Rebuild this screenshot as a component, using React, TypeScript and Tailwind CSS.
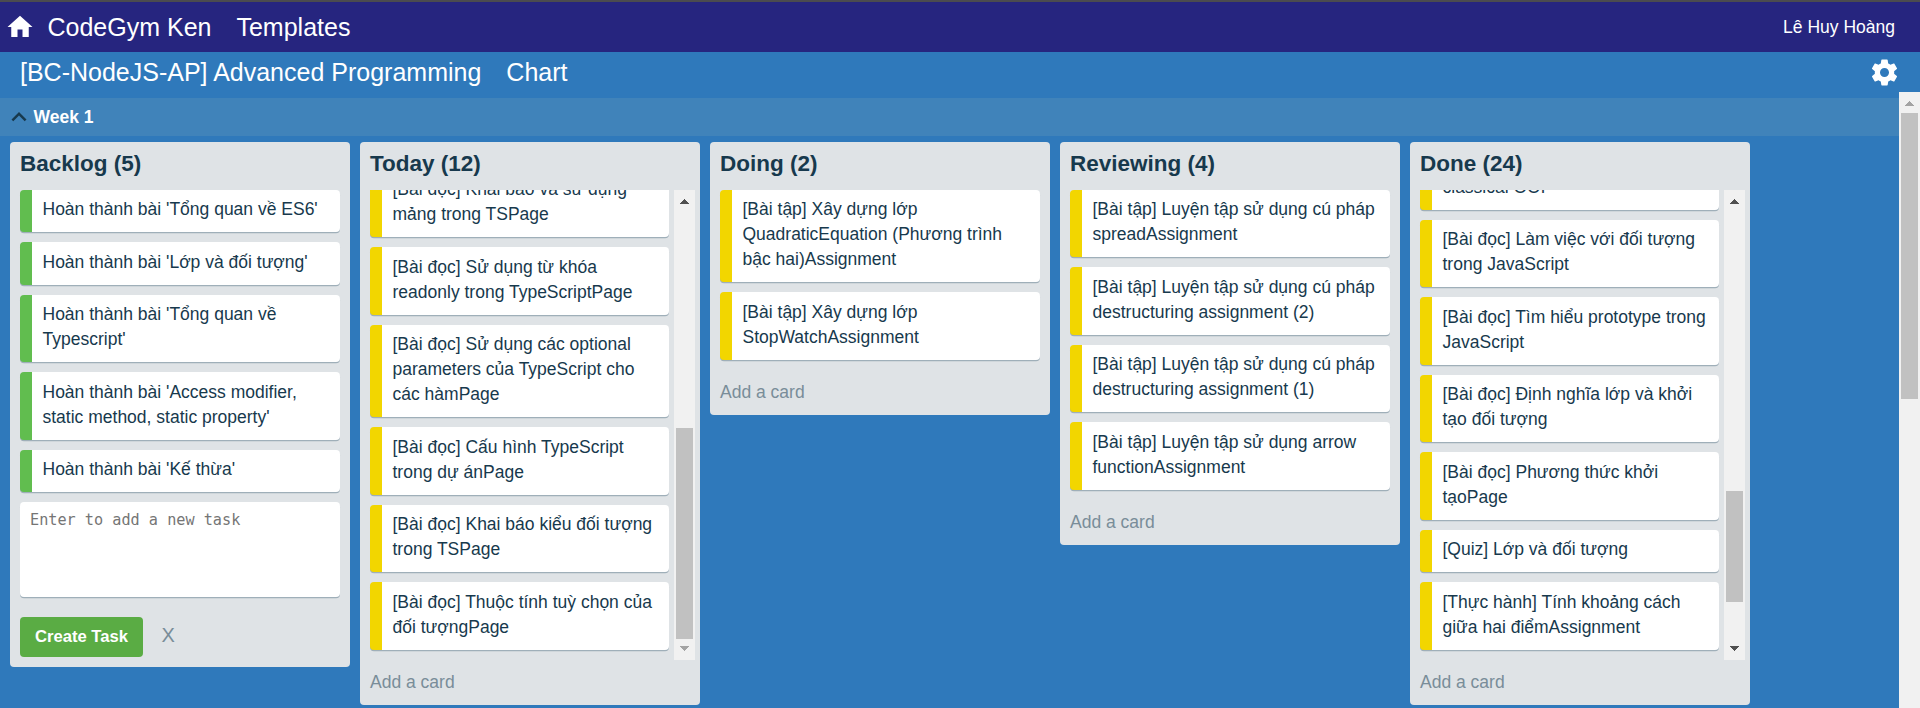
import React from "react";
import { MdHome, MdKeyboardArrowUp } from "react-icons/md";

type Card = { lines: string[]; done?: boolean };
type Column = {
  title: string;
  cards: Card[];
  composer?: boolean;
  scroll?: { thumb: string; atEnd: boolean };
};

const columns: Column[] = [
  {
    title: "Backlog (5)",
    composer: true,
    cards: [
      { lines: ["Hoàn thành bài 'Tổng quan về ES6'"], done: true },
      { lines: ["Hoàn thành bài 'Lớp và đối tượng'"], done: true },
      { lines: ["Hoàn thành bài 'Tổng quan về", "Typescript'"], done: true },
      { lines: ["Hoàn thành bài 'Access modifier,", "static method, static property'"], done: true },
      { lines: ["Hoàn thành bài 'Kế thừa'"], done: true },
    ],
  },
  {
    title: "Today (12)",
    scroll: { thumb: "mt-[217px] h-[211px]", atEnd: true },
    cards: [
      { lines: ["[Bài đọc] Khai báo và sử dụng", "mảng trong TSPage"] },
      { lines: ["[Bài đọc] Sử dụng từ khóa", "readonly trong TypeScriptPage"] },
      { lines: ["[Bài đọc] Sử dụng các optional", "parameters của TypeScript cho", "các hàmPage"] },
      { lines: ["[Bài đọc] Cấu hình TypeScript", "trong dự ánPage"] },
      { lines: ["[Bài đọc] Khai báo kiểu đối tượng", "trong TSPage"] },
      { lines: ["[Bài đọc] Thuộc tính tuỳ chọn của", "đối tượngPage"] },
    ],
  },
  {
    title: "Doing (2)",
    cards: [
      { lines: ["[Bài tập] Xây dựng lớp", "QuadraticEquation (Phương trình", "bậc hai)Assignment"] },
      { lines: ["[Bài tập] Xây dựng lớp", "StopWatchAssignment"] },
    ],
  },
  {
    title: "Reviewing (4)",
    cards: [
      { lines: ["[Bài tập] Luyện tập sử dụng cú pháp", "spreadAssignment"] },
      { lines: ["[Bài tập] Luyện tập sử dụng cú pháp", "destructuring assignment (2)"] },
      { lines: ["[Bài tập] Luyện tập sử dụng cú pháp", "destructuring assignment (1)"] },
      { lines: ["[Bài tập] Luyện tập sử dụng arrow", "functionAssignment"] },
    ],
  },
  {
    title: "Done (24)",
    scroll: { thumb: "mt-[280px] h-[111px]", atEnd: false },
    cards: [
      { lines: ["classical OOP"] },
      { lines: ["[Bài đọc] Làm việc với đối tượng", "trong JavaScript"] },
      { lines: ["[Bài đọc] Tìm hiểu prototype trong", "JavaScript"] },
      { lines: ["[Bài đọc] Định nghĩa lớp và khởi", "tạo đối tượng"] },
      { lines: ["[Bài đọc] Phương thức khởi", "tạoPage"] },
      { lines: ["[Quiz] Lớp và đối tượng"] },
      { lines: ["[Thực hành] Tính khoảng cách", "giữa hai điểmAssignment"] },
    ],
  },
];

function Gear() {
  return (
    <svg className="mt-[5px] mr-[-1px] ml-auto h-[31px] w-[31px] fill-white" viewBox="0 0 24 24">
      <path d="M19.43 12.98c.04-.32.07-.64.07-.98s-.03-.66-.07-.98l2.11-1.65c.19-.15.24-.42.12-.64l-2-3.46c-.12-.22-.39-.3-.61-.22l-2.49 1c-.52-.4-1.08-.73-1.69-.98l-.38-2.65C14.46 2.18 14.25 2 14 2h-4c-.25 0-.46.18-.49.42l-.38 2.65c-.61.25-1.17.59-1.69.98l-2.49-1c-.23-.09-.49 0-.61.22l-2 3.46c-.13.22-.07.49.12.64l2.11 1.65c-.04.32-.07.65-.07.98s.03.66.07.98l-2.11 1.65c-.19.15-.24.42-.12.64l2 3.46c.12.22.39.3.61.22l2.49-1c.52.4 1.08.73 1.69.98l.38 2.65c.03.24.24.42.49.42h4c.25 0 .46-.18.49-.42l.38-2.65c.61-.25 1.17-.59 1.69-.98l2.49 1c.23.09.49 0 .61-.22l2-3.46c.12-.22.07-.49-.12-.64l-2.11-1.65zM12 15.5c-1.93 0-3.5-1.57-3.5-3.5s1.57-3.5 3.5-3.5 3.5 1.57 3.5 3.5-1.57 3.5-3.5 3.5z" />
    </svg>
  );
}

function Arrow({ down, muted }: { down?: boolean; muted?: boolean }) {
  return (
    <svg
      className={`h-[21px] w-[21px] shrink-0 ${muted ? "fill-[#a3a3a3]" : "fill-[#505050]"}`}
      viewBox="0 0 21 21"
      shapeRendering="crispEdges"
    >
      <path d={down ? "M6 7h9v1h-1v1h-1v1h-1v1h-1v1h-1v-1H9v-1H8V9H7V8H6z" : "M6 14h9v-1h-1v-1h-1v-1h-1v-1h-1V9h-1v1H9v1H8v1H7v1H6z"} />
    </svg>
  );
}

function TaskCard({ card }: { card: Card }) {
  return (
    <div
      className={`mb-[10px] shrink-0 rounded-[4px] border-l-[12px] bg-white pt-[7.5px] pb-[10px] pl-[10.5px] shadow-[0_1.25px_0_#9fafb9] ${
        card.done ? "border-[#61bd4f]" : "border-[#f2d600]"
      }`}
    >
      {card.lines.map((line) => (
        <p key={line} className="h-[25px] text-[17.5px] leading-[25px] whitespace-nowrap">
          {line}
        </p>
      ))}
    </div>
  );
}

function Composer() {
  return (
    <div className="px-[10px] pb-[10px]">
      <textarea
        placeholder="Enter to add a new task"
        className="block h-[95px] w-full resize-none rounded-[4px] bg-white px-[10px] py-[8px] font-['DejaVu_Sans_Mono',monospace] text-[15.2px] leading-[20px] shadow-[0_1.25px_0_#9fafb9] placeholder:text-[#757575] placeholder:opacity-100"
      />
      <div className="mt-[19.5px] flex items-center">
        <button className="h-[40px] w-[123px] rounded-[4px] bg-[#5aac44] text-[16.67px] font-bold text-white">
          Create Task
        </button>
        <span className="-mt-[2px] ml-[18.5px] text-[20px] leading-[25px] text-[#798d99]">X</span>
      </div>
    </div>
  );
}

function BoardColumn({ column }: { column: Column }) {
  const cards = column.cards.map((card) => <TaskCard key={card.lines.join(" ")} card={card} />);
  return (
    <section className="w-[340px] shrink-0 rounded-[4px] bg-[#dfe3e6]">
      <h2 className="h-[48px] pt-[7px] pl-[10px] text-[22.5px] leading-[30px] font-bold">{column.title}</h2>
      {column.scroll ? (
        <div className="flex h-[470px] overflow-hidden pr-[5px] pl-[10px]">
          <div className="flex w-[299px] flex-col justify-end">{cards}</div>
          <div className="ml-[5px] flex w-[21px] flex-col bg-[#f1f1f1]">
            <Arrow />
            <div className={`mx-[2px] shrink-0 bg-[#c1c1c1] ${column.scroll.thumb}`} />
            <div className="grow" />
            <Arrow down muted={column.scroll.atEnd} />
          </div>
        </div>
      ) : (
        <div className="px-[10px]">{cards}</div>
      )}
      {column.composer ? (
        <Composer />
      ) : (
        <div className="h-[45px] pt-[10px] pl-[10px] text-[17.5px] leading-[25px] text-[#798d99]">Add a card</div>
      )}
    </section>
  );
}

export default function App() {
  return (
    <div className="flex h-[708px] w-[1920px] flex-col overflow-hidden bg-[#2f79bb] font-['Liberation_Sans',Arial,sans-serif] text-[#17394d]">
      <header className="flex h-[52px] shrink-0 items-center border-t-2 border-[#4b4b4f] bg-[#26257f] pr-[25px] pl-[5px] text-[25px] text-white">
        <MdHome size={30} />
        <span className="ml-[12.5px] pt-[2px]">CodeGym Ken</span>
        <span className="ml-[25px] pt-[2px]">Templates</span>
        <span className="ml-auto pt-[1px] text-[17.5px]">Lê Huy Hoàng</span>
      </header>
      <div className="flex min-h-0 grow">
        <div className="w-[1899px]">
          <nav className="flex h-[46px] pl-[20px] text-[25px] leading-[40px] text-white">
            <span>[BC-NodeJS-AP] Advanced Programming</span>
            <span className="ml-[25px]">Chart</span>
            <Gear />
          </nav>
          <div className="flex h-[38px] items-center bg-[#4083ba] pl-[4px] text-[17.5px] font-bold text-white">
            <MdKeyboardArrowUp size={30} className="mr-[-0.5px] text-[#17394d]" />
            Week 1
          </div>
          <main className="flex items-start gap-[10px] pt-[5.95px] pl-[10px]">
            {columns.map((column) => (
              <BoardColumn key={column.title} column={column} />
            ))}
          </main>
        </div>
        <div className="mt-[40px] flex w-[21px] flex-col bg-[#f1f1f1]">
          <Arrow muted />
          <div className="mx-[2px] h-[286px] bg-[#c1c1c1]" />
        </div>
      </div>
    </div>
  );
}
